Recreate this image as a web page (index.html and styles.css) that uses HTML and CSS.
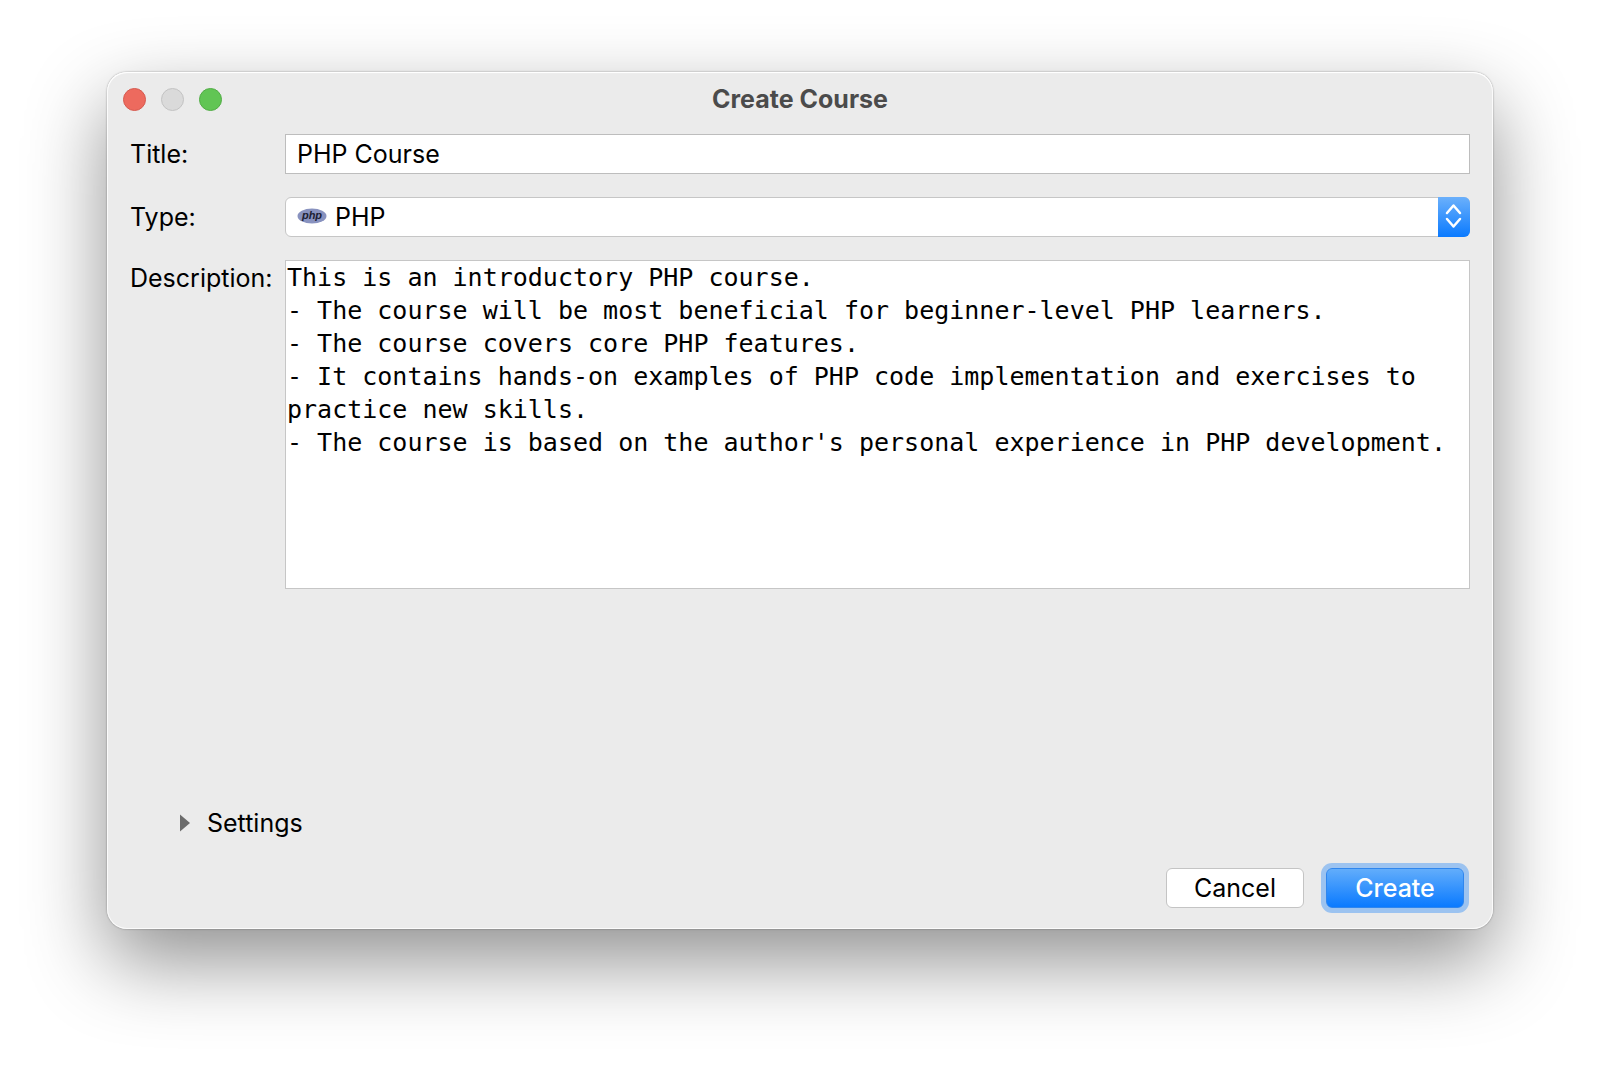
FILE: index.html
```html
<!DOCTYPE html>
<html lang="en">

<head>
    <meta charset="UTF-8">
    <meta name="viewport" content="width=device-width, initial-scale=1.0">
    <title>Create Course</title>
    <link rel="stylesheet" href="styles.css">
</head>

<body>
    <main class="dialog">
        <header class="titlebar">
            <div class="window-controls">
                <button type="button" class="dot close" aria-label="Close"></button>
                <button type="button" class="dot minimize" aria-label="Minimize" disabled></button>
                <button type="button" class="dot maximize" aria-label="Zoom"></button>
            </div>
            <h1>Create Course</h1>
        </header>

        <form class="course-form">
            <div class="fields">
                <label for="title">Title:</label>
                <input type="text" id="title" class="text-input" value="PHP Course">

                <label for="type">Type:</label>
                <div class="select-box">
                    <select id="type">
                        <option selected>PHP</option>
                    </select>
                    <svg class="php-logo" viewBox="0 0 30 16" aria-hidden="true">
                        <ellipse cx="15" cy="8" rx="14.5" ry="7.5" />
                        <text x="15" y="11" text-anchor="middle">php</text>
                    </svg>
                    <span class="stepper">
                        <svg viewBox="0 0 32 40" aria-hidden="true">
                            <path d="M9 16 15.500 8.500l6.500 7.500M9 22 15.500 29.500l6.500-7.500" />
                        </svg>
                    </span>
                </div>

                <label for="description" class="label-top">Description:</label>
                <textarea id="description" spellcheck="false">This is an introductory PHP course.
- The course will be most beneficial for beginner-level PHP learners.
- The course covers core PHP features.
- It contains hands-on examples of PHP code implementation and exercises to practice new skills.
- The course is based on the author's personal experience in PHP development.</textarea>
            </div>

            <details class="settings">
                <summary>
                    <svg viewBox="0 0 10 18" aria-hidden="true">
                        <path d="M0 0.500 10 9 0 17.500z" />
                    </svg>
                    Settings
                </summary>
            </details>

            <div class="actions">
                <button type="button" class="btn">Cancel</button>
                <button type="submit" class="btn primary">Create</button>
            </div>
        </form>
    </main>
</body>

</html>
```
FILE: styles.css
```css
* {
    box-sizing: border-box;
}

body {
    margin: 0;
    min-height: 100vh;
    padding: 72px 107px 141px;
    display: flex;
    background-color: #fff;
    color: #000;
    font-family: Inter, "Liberation Sans", sans-serif;
    font-size: 25px;
    line-height: 32px;
}

.dialog {
    flex: 1;
    display: flex;
    flex-direction: column;
    background-color: #ebebeb;
    border-radius: 20px;
    box-shadow:
        inset 0 1px 1px #fff,
        inset 0 0 0 1px rgba(255, 255, 255, 0.8),
        0 0 2px rgba(0, 0, 0, 0.4),
        0 32px 80px rgba(0, 0, 0, 0.44);
}

.titlebar {
    display: grid;
    grid-template-columns: 1fr auto 1fr;
    align-items: center;
    height: 54px;
    padding: 0 16px;
}

.window-controls {
    display: flex;
    gap: 15px;
}

.dot {
    width: 23px;
    height: 23px;
    padding: 0;
    border: 1px solid;
    border-radius: 50%;
}

.close {
    background-color: #ed6a5e;
    border-color: #d65a4f;
}

.minimize {
    background-color: #dadada;
    border-color: #c3c3c3;
}

.maximize {
    background-color: #61c554;
    border-color: #52ad46;
}

h1 {
    margin: 0;
    color: #4b4b4b;
    font-size: 25px;
    font-weight: 700;
    line-height: 32px;
}

.course-form {
    flex: 1;
    display: flex;
    flex-direction: column;
    padding: 8px 23px 21px;
}

.fields {
    display: grid;
    grid-template-columns: 143px 1fr;
    gap: 23px 12px;
    align-items: center;
}

.label-top {
    align-self: start;
    padding-top: 2px;
}

.text-input,
select,
textarea {
    width: 100%;
    border: 1px solid #bdbdbd;
    background-color: #fff;
    color: inherit;
    font: inherit;
    outline: none;
}

.text-input {
    height: 40px;
    padding: 0 11px;
}

.select-box {
    position: relative;
}

select {
    display: block;
    height: 40px;
    padding: 0 40px 0 49px;
    border-color: #c6c6c6;
    border-radius: 6px;
    appearance: none;
}

.php-logo {
    position: absolute;
    top: 11px;
    left: 12px;
    width: 30px;
    height: 16px;
    pointer-events: none;
}

.php-logo ellipse {
    fill: #8892bf;
}

.php-logo text {
    fill: #1c2033;
    font-family: "Liberation Sans", sans-serif;
    font-size: 11px;
    font-style: italic;
    font-weight: 700;
}

.stepper {
    position: absolute;
    top: 0;
    right: 0;
    width: 32px;
    height: 40px;
    border-radius: 0 6px 6px 0;
    background: linear-gradient(#6bb0fb, #0a7aff);
    pointer-events: none;
}

.stepper svg {
    display: block;
    fill: none;
    stroke: #fff;
    stroke-width: 2.5;
    stroke-linecap: round;
    stroke-linejoin: round;
}

textarea {
    display: block;
    height: 329px;
    padding: 0 1px;
    border-color: #c6c6c6;
    font-family: "DejaVu Sans Mono", monospace;
    line-height: 33px;
    resize: none;
}

.settings {
    margin-top: auto;
    padding-left: 50px;
}

summary {
    display: inline-flex;
    align-items: center;
    gap: 17px;
    list-style: none;
    cursor: default;
}

summary svg {
    width: 10px;
    height: 18px;
    fill: #6b6b6b;
}

.actions {
    display: flex;
    justify-content: flex-end;
    gap: 22px;
    margin-top: 29px;
    padding-right: 6px;
}

.btn {
    width: 138px;
    height: 40px;
    padding: 0;
    border: 1px solid #c4c4c4;
    border-radius: 6px;
    background-color: #fff;
    color: #000;
    font: inherit;
}

.primary {
    border-color: #2f86ee;
    background: linear-gradient(#62adfb, #0a7aff);
    box-shadow: 0 0 0 5px #9cc3f0;
    color: #fff;
    font-weight: 500;
}
```
